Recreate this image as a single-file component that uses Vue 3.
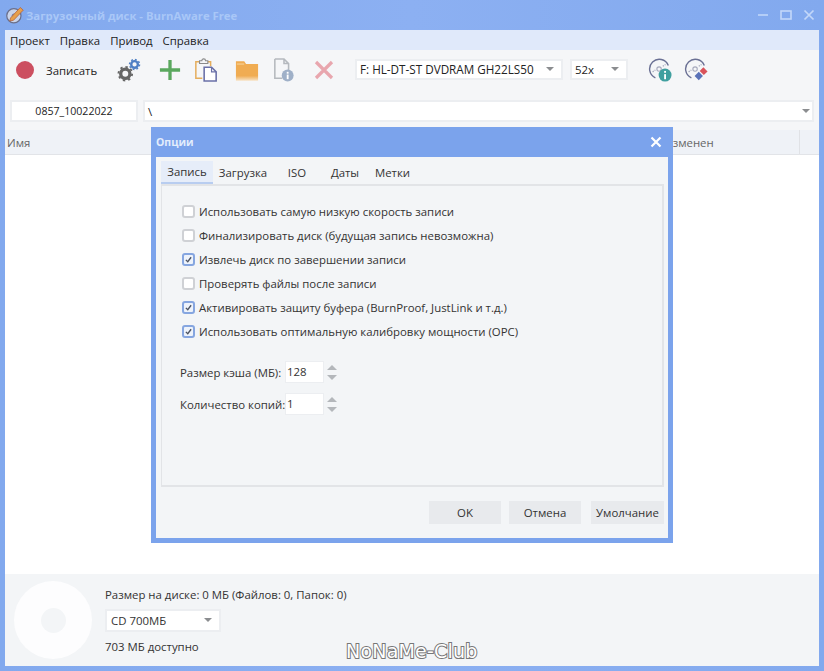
<template>
  <div class="window">
    <div class="titlebar">
      <svg class="app-icon" viewBox="0 0 24 24" width="18" height="18">
        <circle cx="10.5" cy="13" r="9.5" fill="#c9d4ea" stroke="#6a6f8c" stroke-width="1.6" />
        <circle cx="10.5" cy="13" r="2.4" fill="#86a9ec" stroke="#6a6f8c" stroke-width="1" />
        <path d="M6 16 L19 2 L23 5.5 L10 19 L5 20 Z" fill="#e6a04c" stroke="#b2603c" stroke-width="1" />
      </svg>
      <span class="app-title">Загрузочный диск - BurnAware Free</span>
      <div class="win-controls">
        <svg viewBox="0 0 12 12" width="12" height="12"><path d="M1 6h10" stroke="#b3cdf7" stroke-width="2" /></svg>
        <svg viewBox="0 0 12 12" width="12" height="12"><rect x="1" y="2" width="10" height="8" fill="none" stroke="#c3d7f9" stroke-width="1.6" /></svg>
        <svg viewBox="0 0 12 12" width="12" height="12"><path d="M1.5 1.5l9 9M10.5 1.5l-9 9" stroke="#c3d7f9" stroke-width="1.7" /></svg>
      </div>
    </div>

    <div class="body">
      <div class="menubar">
        <span v-for="m in menus" :key="m">{{ m }}</span>
      </div>

      <div class="toolbar">
        <span class="rec-dot"></span>
        <span class="rec-label">Записать</span>
        <svg class="tool gears" viewBox="0 0 26 26" width="24" height="24">
          <circle cx="9" cy="17" r="5" fill="none" stroke="#666" stroke-width="3.6" />
          <circle cx="9" cy="17" r="7.4" fill="none" stroke="#666" stroke-width="2" stroke-dasharray="2.6 3.2" />
          <circle cx="19" cy="7" r="3.6" fill="none" stroke="#4f7fc4" stroke-width="2.6" />
          <circle cx="19" cy="7" r="5.4" fill="none" stroke="#4f7fc4" stroke-width="1.6" stroke-dasharray="2 2.2" />
        </svg>
        <svg class="tool plus" viewBox="0 0 24 24" width="22" height="22">
          <path d="M12 1v22M1 12h22" stroke="#5aa85e" stroke-width="3.6" />
        </svg>
        <svg class="tool paste" viewBox="0 0 26 26" width="24" height="24">
          <path d="M7 4H2v18h7" fill="none" stroke="#e5ad5c" stroke-width="1.6" />
          <path d="M14 4h4v5" fill="none" stroke="#e5ad5c" stroke-width="1.6" />
          <path d="M6 5V3h2.5a2 2 0 0 1 4 0H15v3H6z" fill="#f5f6f8" stroke="#8a8a8a" stroke-width="1.2" />
          <path d="M11 10h8l5 5v10H11z" fill="#fff" stroke="#6a70a8" stroke-width="1.7" />
          <path d="M19 10v5h5" fill="none" stroke="#6a70a8" stroke-width="1.3" />
        </svg>
        <svg class="tool folder" viewBox="0 0 26 24" width="24" height="23">
          <defs>
            <linearGradient id="fold" x1="0" y1="0" x2="0" y2="1">
              <stop offset="0.75" stop-color="#f0ac52" />
              <stop offset="1" stop-color="#f7e2c4" />
            </linearGradient>
          </defs>
          <path d="M1 2h9l2 3h13v18H1z" fill="url(#fold)" />
          <path d="M2 5h8" stroke="#f8d9a8" stroke-width="1" />
        </svg>
        <svg class="tool info" viewBox="0 0 24 26" width="22" height="24">
          <path d="M2 1h10l5 5v8M17 6h-5V1M2 1v21h8" fill="none" stroke="#b5b9be" stroke-width="1.7" />
          <circle cx="16" cy="19" r="6.5" fill="#9fb0c8" />
          <rect x="15" y="18" width="2" height="5" fill="#fff" />
          <rect x="15" y="15" width="2" height="2" fill="#fff" />
        </svg>
        <svg class="tool cross" viewBox="0 0 20 20" width="20" height="20">
          <path d="M2 2l16 16M18 2L2 18" stroke="#e8a6ae" stroke-width="3.2" />
        </svg>

        <div class="combo drive"><span>F: HL-DT-ST DVDRAM GH22LS50</span><i class="arrow"></i></div>
        <div class="combo speed"><span>52x</span><i class="arrow"></i></div>

        <svg class="tool disc-info" viewBox="0 0 26 26" width="24" height="24">
          <path d="M8 21.5A10.5 10.5 0 1 1 22 8" fill="none" stroke="#6a7094" stroke-width="1.5" />
          <circle cx="12" cy="12" r="2.4" fill="none" stroke="#a7aabd" stroke-width="1.2" />
          <path d="M5 15l3-2M16 9l3-2" stroke="#a7aabd" stroke-width="1.4" stroke-dasharray="1.5 1" />
          <circle cx="18.5" cy="18.5" r="7" fill="#3f9f9f" />
          <rect x="17.5" y="17.5" width="2" height="5.5" fill="#fff" />
          <rect x="17.5" y="14" width="2" height="2" fill="#fff" />
        </svg>
        <svg class="tool disc-erase" viewBox="0 0 26 26" width="24" height="24">
          <path d="M8 21.5A10.5 10.5 0 1 1 22 8" fill="none" stroke="#6a7094" stroke-width="1.5" />
          <circle cx="12" cy="12" r="2.4" fill="none" stroke="#a7aabd" stroke-width="1.2" />
          <path d="M5 15l3-2M16 9l3-2" stroke="#a7aabd" stroke-width="1.4" stroke-dasharray="1.5 1" />
          <path d="M21 10l4.5 4.5-4 4-4.5-4.5z" fill="#d9525a" />
          <path d="M16 15l4.5 4.5-4.5 4.5-4.5-4.5z" fill="#5a72b8" />
        </svg>
      </div>

      <div class="pathbar">
        <div class="label-box">0857_10022022</div>
        <div class="path-box"><span>\</span><i class="arrow"></i></div>
      </div>

      <div class="list-head">
        <span class="col-name">Имя</span>
        <span class="col-mod">Изменен</span>
        <span class="col-end"></span>
      </div>

      <div class="list"></div>

      <div class="status">
        <div class="disc"><div class="hub"></div></div>
        <div class="status-info">
          <div>Размер на диске: 0 МБ (Файлов: 0, Папок: 0)</div>
          <div class="combo media"><span>CD 700МБ</span><i class="arrow"></i></div>
          <div>703 МБ доступно</div>
        </div>
      </div>
    </div>

    <div class="dialog">
      <div class="dlg-title">
        <span>Опции</span>
        <svg viewBox="0 0 12 12" width="12" height="12"><path d="M1.5 1.5l9 9M10.5 1.5l-9 9" stroke="#fff" stroke-width="2.2" /></svg>
      </div>
      <div class="dlg-body">
        <div class="tabs">
          <span v-for="(t, i) in tabs" :key="t.name" class="tab" :class="{ active: i === 0 }" :style="{ width: t.width + 'px' }">{{ t.name }}</span>
        </div>
        <div class="panel">
          <label v-for="o in options" :key="o.text" class="opt">
            <span class="check" :class="{ on: o.on }">
              <svg v-if="o.on" viewBox="0 0 12 12" width="11" height="11"><path d="M2.5 6.5l2.5 2.5 4.5-6" fill="none" stroke="#4d5462" stroke-width="1.8" /></svg>
            </span>
            {{ o.text }}
          </label>
          <div class="spin-row first">
            <span class="spin-label">Размер кэша (МБ):</span>
            <span class="spin-box">128</span>
            <span class="spin-arrows"><i class="up"></i><i class="down"></i></span>
          </div>
          <div class="spin-row">
            <span class="spin-label">Количество копий:</span>
            <span class="spin-box">1</span>
            <span class="spin-arrows"><i class="up"></i><i class="down"></i></span>
          </div>
        </div>
        <div class="dlg-buttons">
          <button class="btn">OK</button>
          <button class="btn">Отмена</button>
          <button class="btn">Умолчание</button>
        </div>
      </div>
    </div>

    <div class="watermark">NoNaMe-Club</div>
  </div>
</template>

<script setup>
const menus = ['Проект', 'Правка', 'Привод', 'Справка']

const tabs = [
  { name: 'Запись', width: 52 },
  { name: 'Загрузка', width: 60 },
  { name: 'ISO', width: 48 },
  { name: 'Даты', width: 48 },
  { name: 'Метки', width: 47 },
]

const options = [
  { text: 'Использовать самую низкую скорость записи', on: false },
  { text: 'Финализировать диск (будущая запись невозможна)', on: false },
  { text: 'Извлечь диск по завершении записи', on: true },
  { text: 'Проверять файлы после записи', on: false },
  { text: 'Активировать защиту буфера (BurnProof, JustLink и т.д.)', on: true },
  { text: 'Использовать оптимальную калибровку мощности (OPC)', on: true },
]
</script>

<style>
html, body {
  margin: 0;
  background: #82a9ee;
}
</style>

<style scoped>
.window {
  position: relative;
  width: 824px;
  height: 671px;
  overflow: hidden;
  display: flex;
  flex-direction: column;
  background: linear-gradient(90deg, #82a9ee, #8cb0f2 50%, #82a9ee);
  font-family: "Open Sans", "Liberation Sans", sans-serif;
  font-size: 11.4px;
  color: #222;
}

.titlebar {
  height: 30px;
  flex: none;
  display: flex;
  align-items: center;
  padding: 0 6px;
}

.app-icon {
  margin-right: 2px;
}

.app-title {
  font-weight: 700;
  font-size: 11.3px;
  color: #a9c7f7;
}

.win-controls {
  margin-left: auto;
  display: flex;
  gap: 11px;
  padding-right: 3px;
}

.body {
  flex: 1;
  margin: 0 5px 5px;
  display: flex;
  flex-direction: column;
  background: #fff;
}

.menubar {
  height: 20px;
  flex: none;
  background: #e0e9fa;
  display: flex;
  align-items: center;
  gap: 10px;
  padding-left: 5px;
}

.toolbar {
  height: 42px;
  box-sizing: border-box;
  padding-bottom: 2px;
  flex: none;
  background: #f5f6f8;
  display: flex;
  align-items: center;
}

.rec-dot {
  width: 18px;
  height: 18px;
  border-radius: 50%;
  background: #cc4f60;
  margin-left: 11px;
}

.rec-label {
  margin-left: 12px;
  width: 71px;
}

.tool {
  flex: none;
}

.plus { margin-left: 18px; }
.paste { margin-left: 13px; }
.folder { margin-left: 17px; }
.info { margin-left: 14px; }
.cross { margin-left: 19px; }
.disc-info { margin-left: 20px; }
.disc-erase { margin-left: 12px; }

.combo {
  height: 21px;
  box-sizing: border-box;
  background: #fff;
  border: 2px solid #eceef1;
  display: flex;
  align-items: center;
  justify-content: space-between;
  padding: 0 7px 0 3px;
}

.arrow {
  width: 0;
  height: 0;
  border-left: 4px solid transparent;
  border-right: 4px solid transparent;
  border-top: 4px solid #8b8d90;
}

.drive {
  width: 208px;
  margin-left: 21px;
  margin-bottom: 2px;
  font-size: 11.7px;
}

.speed {
  width: 58px;
  margin-left: 7px;
  margin-bottom: 2px;
}

.pathbar {
  flex: none;
  display: flex;
  gap: 5px;
  padding: 8px 5px 0;
  box-sizing: border-box;
  height: 38px;
  background: #f5f6f8;
}

.label-box, .path-box {
  height: 22px;
  box-sizing: border-box;
  background: #fff;
  border: 2px solid #eceef1;
  display: flex;
  align-items: center;
}

.label-box {
  width: 128px;
  justify-content: center;
  font-size: 10.6px;
}

.path-box {
  flex: 1;
  justify-content: space-between;
  padding: 0 2px 0 3px;
}

.list-head {
  height: 25px;
  flex: none;
  display: flex;
  align-items: center;
  background: #eff2f7;
  border-bottom: 1px solid #e2e4e8;
  box-sizing: border-box;
  color: #666;
  padding-left: 2px;
}

.col-name {
  flex: 1;
}

.col-mod {
  width: 135px;
}

.col-end {
  width: 19px;
  height: 100%;
  border-left: 1px solid #e0e2e6;
}

.list {
  flex: 1;
  background: #fff;
}

.status {
  height: 92px;
  flex: none;
  background: #f3f5f7;
  display: flex;
  align-items: center;
  padding-left: 9px;
}

.disc {
  width: 78px;
  height: 78px;
  border-radius: 50%;
  background: #fdfdfe;
  display: flex;
  align-items: center;
  justify-content: center;
}

.hub {
  width: 25px;
  height: 25px;
  border-radius: 50%;
  background: #f3f5f7;
}

.status-info {
  margin-left: 13px;
  display: flex;
  flex-direction: column;
  gap: 7px;
  color: #333;
}

.media {
  width: 116px;
  height: 23px;
  padding-left: 4px;
}

.dialog {
  position: absolute;
  left: 151px;
  top: 127px;
  width: 522px;
  height: 416px;
  box-sizing: border-box;
  background: #7ba3ec;
  padding: 0 5px 5px;
  display: flex;
  flex-direction: column;
}

.dlg-title {
  height: 30px;
  flex: none;
  display: flex;
  align-items: center;
  justify-content: space-between;
  font-weight: 700;
  font-size: 10.5px;
  color: #e3edfc;
  padding-right: 6px;
}

.dlg-body {
  flex: 1;
  background: #f3f5f7;
  padding: 4px 4px 0 5px;
  display: flex;
  flex-direction: column;
}

.tabs {
  height: 23px;
  flex: none;
  display: flex;
}

.tab {
  display: flex;
  align-items: center;
  justify-content: center;
  color: #333;
}

.tab.active {
  background: #e6edf9;
  border-bottom: 2px solid #b8cdf0;
  box-sizing: border-box;
}

.panel {
  flex: 1;
  border: 1px solid #e2e4e7;
  border-width: 2px 2px 2px 1px;
  padding: 13px 0 0 20px;
  display: flex;
  flex-direction: column;
}

.opt {
  height: 24px;
  display: flex;
  align-items: center;
  gap: 4px;
  color: #333;
}

.check {
  width: 13px;
  height: 13px;
  box-sizing: border-box;
  flex: none;
  background: #fff;
  border: 2px solid #cfd1d5;
  border-radius: 3px;
  display: flex;
  align-items: center;
  justify-content: center;
}

.check.on {
  border-color: #86a6e0;
  background: #eef3fb;
}

.spin-row {
  display: flex;
  align-items: center;
  height: 26px;
  margin-top: 6px;
  margin-left: -2px;
  color: #333;
}

.spin-row.first {
  margin-top: 16px;
}

.spin-label {
  width: 105px;
  white-space: nowrap;
}

.spin-box {
  width: 39px;
  height: 22px;
  box-sizing: border-box;
  background: #fff;
  border: 1px solid #eceef1;
  padding-left: 1px;
  line-height: 20px;
}

.spin-arrows {
  display: flex;
  flex-direction: column;
  gap: 5px;
  margin-left: 3px;
}

.spin-arrows i {
  width: 0;
  height: 0;
  border-left: 5px solid transparent;
  border-right: 5px solid transparent;
}

.spin-arrows .up {
  border-bottom: 5px solid #b4b7bb;
}

.spin-arrows .down {
  border-top: 5px solid #b4b7bb;
}

.dlg-buttons {
  height: 51px;
  flex: none;
  display: flex;
  justify-content: flex-end;
  padding-top: 14px;
  box-sizing: border-box;
}

.btn {
  width: 72px;
  height: 23px;
  border: none;
  padding: 0;
  margin-left: 8px;
  background: #e8eaed;
  font: inherit;
  color: #333;
}

.btn:last-child {
  width: 73px;
  margin-left: 10px;
}

.watermark {
  position: absolute;
  left: 346px;
  top: 640px;
  font-family: "DejaVu Sans", sans-serif;
  font-size: 19px;
  letter-spacing: 0.2px;
  color: #fff;
  -webkit-text-stroke: 2px #777;
  paint-order: stroke fill;
}
</style>
